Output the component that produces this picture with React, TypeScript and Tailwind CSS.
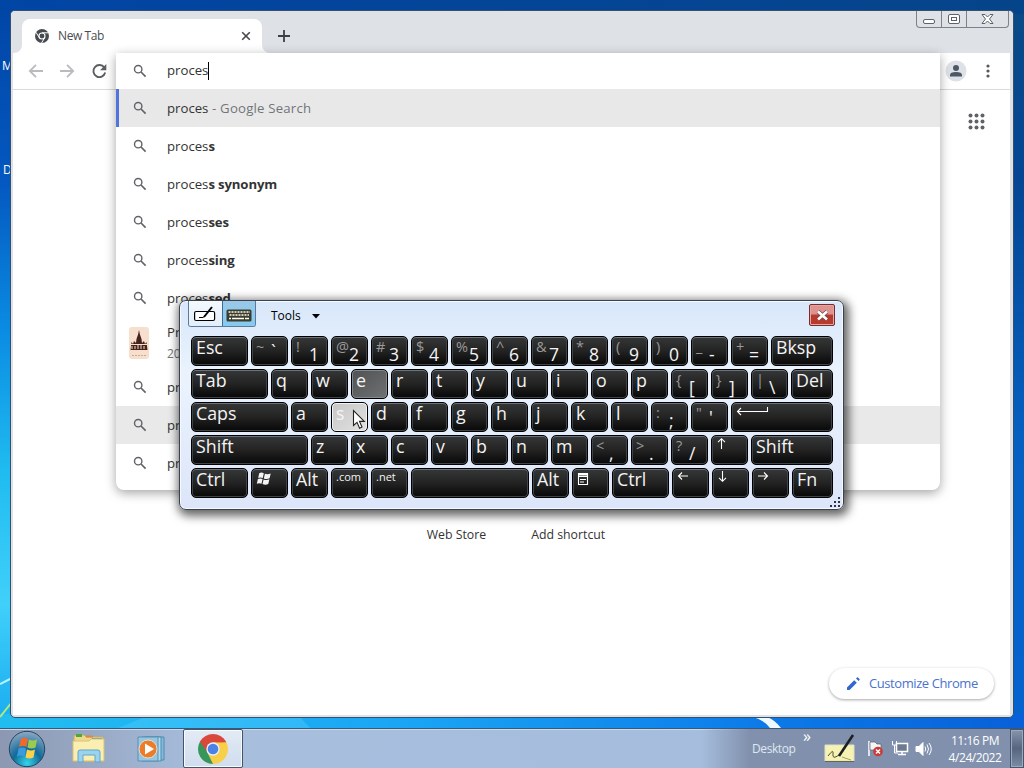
import type { ReactNode } from "react";
import clsx from "clsx";

type KeyDef = {
  w?: string;
  label?: string;
  shift?: string;
  small?: boolean;
  icon?: ReactNode;
  state?: "lit" | "pressed";
};

const letters = (text: string): KeyDef[] =>
  text.split("").map((label) => ({ label }));

const svgKey = {
  fill: "none",
  stroke: "#fff",
  strokeWidth: 1.1,
};

const winIcon = (
  <svg width="16" height="14" viewBox="0 0 16 14" className="mt-[3px]">
    <path
      fill="#f4f4f4"
      d="M3.2 1.2Q5.5 0 7.8 1.2L6.8 6Q4.5 5 2.2 6ZM8.9 1.7Q11.5 2.7 14.7 1.5L13.6 6.2Q11 7.5 7.8 6.4ZM1.9 7Q4.3 6 6.6 7.1L5.5 11.8Q3.3 10.6 .8 11.7ZM7.6 7.5Q10.5 8.6 13.4 7.3L12.3 12Q9.5 13.3 6.5 12.1Z"
    />
  </svg>
);

const menuIcon = (
  <svg width="12" height="14" viewBox="0 0 12 14" className="mt-[3px]">
    <path {...svgKey} d="M1 1.5H10.5M1 4.5H10.5M1.5 1V12.5H10.5V1M3 7.5H9M3 10H7" />
    <path stroke="#fff" strokeWidth="2" d="M1 2.5H11" />
  </svg>
);

const arrow = (d: string) => (
  <svg width="13" height="13" viewBox="0 0 13 13" className="mt-px">
    <path {...svgKey} d={d} />
  </svg>
);

const enterIcon = (
  <svg width="33" height="12" viewBox="0 0 33 12" className="mt-px">
    <path {...svgKey} d="M31.5 3V7.5H1.5M5 4L1.5 7.5L5 11" />
  </svg>
);

const rows: KeyDef[][] = [
  [
    { label: "Esc", w: "w-[57px]" },
    { shift: "~", label: "`" },
    { shift: "!", label: "1" },
    { shift: "@", label: "2" },
    { shift: "#", label: "3" },
    { shift: "$", label: "4" },
    { shift: "%", label: "5" },
    { shift: "^", label: "6" },
    { shift: "&", label: "7" },
    { shift: "*", label: "8" },
    { shift: "(", label: "9" },
    { shift: ")", label: "0" },
    { shift: "_", label: "-" },
    { shift: "+", label: "=" },
    { label: "Bksp", w: "w-[62px]" },
  ],
  [
    { label: "Tab", w: "w-[77px]" },
    ...letters("qw"),
    { label: "e", state: "lit" },
    ...letters("rtyuiop"),
    { shift: "{", label: "[" },
    { shift: "}", label: "]" },
    { shift: "|", label: "\\" },
    { label: "Del", w: "w-[42px]" },
  ],
  [
    { label: "Caps", w: "w-[97px]" },
    { label: "a" },
    { label: "s", state: "pressed" },
    ...letters("dfghjkl"),
    { shift: ":", label: ";" },
    { shift: '"', label: "'" },
    { icon: enterIcon, w: "w-[102px]" },
  ],
  [
    { label: "Shift", w: "w-[117px]" },
    ...letters("zxcvbnm"),
    { shift: "<", label: "," },
    { shift: ">", label: "." },
    { shift: "?", label: "/" },
    { icon: arrow("M5.5 12V2M2 5.2L5.5 1.7L9 5.2") },
    { label: "Shift", w: "w-[82px]" },
  ],
  [
    { label: "Ctrl", w: "w-[57px]" },
    { icon: winIcon },
    { label: "Alt" },
    { label: ".com", small: true },
    { label: ".net", small: true },
    { w: "w-[118px]" },
    { label: "Alt" },
    { icon: menuIcon },
    { label: "Ctrl", w: "w-[57px]" },
    { icon: arrow("M11 6H1.5M5 2.5L1.5 6L5 9.5") },
    { icon: arrow("M5.5 1V11M2 7.8L5.5 11.3L9 7.8") },
    { icon: arrow("M1 6H10.5M7 2.5L10.5 6L7 9.5") },
    { label: "Fn", w: "w-[41px]" },
  ],
];

const suggestions = [
  { text: "proces", hint: " - Google Search", active: true },
  { text: "proces", bold: "s" },
  { text: "proces", bold: "s synonym" },
  { text: "proces", bold: "ses" },
  { text: "proces", bold: "sing" },
  { text: "proces", bold: "sed" },
  { text: "Pr", sub: "20", thumb: true },
  { text: "pr" },
  { text: "pr", hover: true },
  { text: "pr" },
];

function Key({ w, label, shift, small, icon, state }: KeyDef) {
  const high = label === "`" || label === "'";
  return (
    <div
      className={clsx(
        "flex h-[30px] items-start overflow-hidden rounded-[5px] border border-black pl-1 text-[#f4f4f4]",
        w ?? "w-[37px]",
        !state &&
          "bg-linear-to-b from-[#363738] via-[#232323] to-[#080808] shadow-[inset_0_1px_0_#6a737b,inset_0_0_0_1px_#3f4448]",
        state === "lit" &&
          "bg-linear-to-br from-[#505153] to-[#707173] shadow-[inset_0_0_0_1px_#85888c]",
        state === "pressed" &&
          "bg-linear-to-br from-[#c6c6c6] to-[#e2e2e2] shadow-[inset_0_0_0_1px_#f2f2f2]"
      )}
    >
      {icon}
      {shift && (
        <span className="w-[13px] shrink-0 text-[14.5px] leading-[20px] text-[#9a9a9a]">
          {shift}
        </span>
      )}
      {shift && (
        <span
          className={clsx(
            "text-[17.5px]",
            high ? "leading-[29px]" : "leading-[34px]",
            label === "`" && "pl-0.5"
          )}
        >
          {label}
        </span>
      )}
      {!shift && label && (
        <span
          className={
            small ? "text-[11px] leading-[16px]" : "text-[17.8px] leading-[20px]"
          }
        >
          {label}
        </span>
      )}
    </div>
  );
}

function SearchIcon() {
  return (
    <svg width="14" height="14" viewBox="0 0 14 14" fill="none" stroke="#606367">
      <circle cx="5.2" cy="5.2" r="3.7" strokeWidth="1.4" />
      <path d="M8 8L12.6 12.6" strokeWidth="1.7" />
    </svg>
  );
}

function Thumb() {
  return (
    <svg width="20" height="32" viewBox="0 0 20 32" className="rounded-[3px]">
      <rect width="20" height="32" fill="#f6dfcd" />
      <path
        fill="#46201c"
        d="M10 3L10.8 7L12.5 12L13 16L15 14L16 17L17.5 15L18.5 23H1.5L2.5 15L4 17L5 14L7 16L7.5 12L9.2 7Z"
      />
      <path stroke="#f6dfcd" strokeWidth="1" d="M3 22V19M6 22V19M9 22V18M12 22V18M15 22V19M2 17.5H18" />
      <path stroke="#c9a993" strokeDasharray="2 1" d="M3 28.5H17" />
    </svg>
  );
}

function Omnibox() {
  return (
    <div className="absolute left-[105px] top-[42px] h-[437px] w-[824px] overflow-hidden rounded-b-lg bg-white shadow-[0_3px_11px_rgba(0,0,0,0.36)]">
      <div className="flex h-[36px] items-center pl-[17px]">
        <SearchIcon />
        <span className="ml-[20px] text-[13.2px] text-[#333]">proces</span>
        <span className="h-[18px] w-px bg-black" />
      </div>
      {suggestions.map((s, i) => (
        <div
          key={i}
          className={clsx(
            "flex items-center",
            s.thumb ? "h-[51px] pl-[13px]" : "h-[38px]",
            s.active && "border-l-[3px] border-[#4f74dd] bg-[#e8e8e8] pl-[14px]",
            s.hover && "bg-[#e9e9e9]",
            !s.active && !s.thumb && "pl-[17px]"
          )}
        >
          {s.thumb ? <Thumb /> : <SearchIcon />}
          <div
            className={clsx(
              "whitespace-pre text-[13.2px] leading-[21px] text-[#333]",
              s.thumb ? "ml-[18px]" : "ml-[20px]"
            )}
          >
            {s.text}
            {s.bold && <b className="tracking-[-0.15px]">{s.bold}</b>}
            {s.hint && (
              <span className="tracking-[0.2px] text-[#70757a]">{s.hint}</span>
            )}
            {s.sub && <div className="text-[12px] text-[#70757a]">{s.sub}</div>}
          </div>
        </div>
      ))}
    </div>
  );
}

function TabStrip() {
  return (
    <div className="flex h-[42px] items-end bg-[#dee1e6] pl-[3px]">
      <svg width="8" height="8" viewBox="0 0 8 8">
        <path d="M8 0A8 8 0 0 1 0 8H8Z" fill="#fff" />
      </svg>
      <div className="flex h-[34px] w-[240px] items-center rounded-t-lg bg-white pl-[13px] pr-[11px]">
        <svg width="14" height="14" viewBox="0 0 14 14">
          <circle cx="7" cy="7" r="7" fill="#474b50" />
          <circle cx="7" cy="7" r="3" fill="#474b50" stroke="#fff" strokeWidth="1.1" />
          <path d="M7 3.8H13.5M4.3 8.7L1 3.3M9.7 8.7L6.5 14" stroke="#fff" strokeWidth="1" />
        </svg>
        <span className="ml-[9px] flex-1 text-[12px] tracking-[-0.4px] text-[#4a4d51]">New Tab</span>
        <svg width="10" height="10" viewBox="0 0 10 10">
          <path d="M1.2 1.2L8.8 8.8M8.8 1.2L1.2 8.8" stroke="#44474b" strokeWidth="1.6" />
        </svg>
      </div>
      <svg width="8" height="8" viewBox="0 0 8 8">
        <path d="M0 0A8 8 0 0 0 8 8H0Z" fill="#fff" />
      </svg>
      <svg width="12" height="12" viewBox="0 0 12 12" className="mb-[11px] ml-2">
        <path d="M6 0V12M0 6H12" stroke="#3c4043" strokeWidth="1.8" />
      </svg>
      <div className="ml-auto mr-1 flex h-[17px] self-start rounded-b border border-t-0 border-[#7d8289]">
        <svg width="91" height="16" viewBox="0 0 91 16" fill="none" stroke="#5d6268">
          <path d="M24.5 0V16M49.5 0V16" stroke="#7d8289" />
          <rect x="6.5" y="8.5" width="11" height="4" rx="1.5" fill="#fff" />
          <rect x="31.5" y="3.5" width="11" height="9" rx="1.5" fill="#fff" />
          <rect x="34.5" y="6.5" width="5" height="3" />
          <path
            d="M65 3.5H68L70.5 6L73 3.5H76L72.5 8L76 12.5H73L70.5 10L68 12.5H65L68.5 8Z"
            fill="#fff"
          />
        </svg>
      </div>
    </div>
  );
}

function Toolbar() {
  return (
    <div className="flex h-[37px] items-center border-b border-[#d9dadc] bg-white pl-[15px]">
      <svg width="80" height="16" viewBox="0 0 80 16" fill="none">
        <path d="M15 8H2M8 1.8L1.8 8L8 14.2" stroke="#b9bbbe" strokeWidth="1.8" />
        <path d="M32 8H45M39 1.8L45.2 8L39 14.2" stroke="#b9bbbe" strokeWidth="1.8" />
        <path d="M76.3 4.6A6 6 0 1 0 77.2 9.6" stroke="#5b5e62" strokeWidth="1.9" />
        <path d="M78.3 1V7.3H72Z" fill="#5b5e62" />
      </svg>
      <svg width="22" height="22" viewBox="0 0 22 22" className="ml-auto">
        <circle cx="11" cy="11" r="10.5" fill="#dee1e6" />
        <circle cx="11" cy="8" r="3" fill="#4d5866" />
        <path d="M5 16.5V15Q5 12 11 12T17 15V16.5Z" fill="#4d5866" />
      </svg>
      <svg width="4" height="14" viewBox="0 0 4 14" fill="#55585c" className="ml-[19px] mr-[20px]">
        <circle cx="2" cy="2" r="1.6" />
        <circle cx="2" cy="7" r="1.6" />
        <circle cx="2" cy="12" r="1.6" />
      </svg>
    </div>
  );
}

function Browser() {
  return (
    <div className="absolute left-[10px] top-[10px] flex h-[708px] w-[1004px] flex-col overflow-hidden rounded-[5px] border border-[#34506e] bg-[#dee1e6]">
      <TabStrip />
      <div className="mb-0.5 ml-0.5 mr-[3px] flex grow flex-col bg-white">
        <Toolbar />
        <div className="flex justify-end pr-[25px] pt-[23px]">
          <svg width="17" height="17" viewBox="0 0 17 17" fill="#5f6368">
            {[2.5, 8.5, 14.5].map((y) =>
              [2.5, 8.5, 14.5].map((x) => <circle key={`${x}-${y}`} cx={x} cy={y} r="2" />)
            )}
          </svg>
        </div>
        <div className="mt-[396px] flex justify-center gap-[45px] pl-[9px] text-[12.3px] leading-[18px] text-[#333]">
          <span>Web Store</span>
          <span>Add shortcut</span>
        </div>
        <div className="mb-[16px] mr-[16px] mt-auto flex h-[31px] w-[165px] items-center self-end rounded-full bg-white pl-[17px] text-[13px] tracking-[-0.42px] text-[#4a72cf] shadow-[0_1px_3px_rgba(0,0,0,0.35)]">
          <svg width="14" height="14" viewBox="0 0 14 14" fill="#2f68cf">
            <path d="M1 10.4V13H3.6L10.8 5.8L8.2 3.2ZM12.6 4L10 1.4L11 .5Q11.5 .1 12 .5L13.5 2Q13.9 2.5 13.5 3Z" />
          </svg>
          <span className="ml-[9px] whitespace-nowrap">Customize Chrome</span>
        </div>
      </div>
      <Omnibox />
    </div>
  );
}

function Keyboard() {
  return (
    <div className="absolute left-[179px] top-[300px] flex h-[210px] w-[665px] flex-col rounded-[7px] border border-[#39424d] bg-linear-to-b from-[#d8e7fa] via-[#eaf3fd] via-35% to-[#dde5fa] shadow-[inset_0_0_0_1px_#f5faff,2px_3px_10px_3px_rgba(0,0,0,0.6)]">
      <div className="flex h-[35px] items-start pl-2">
        <div className="flex h-[26px] w-[68px] overflow-hidden rounded-b-[3px] border border-t-0 border-[#5d7a9c]">
          <div className="flex w-[33px] justify-center bg-linear-to-b from-[#f4f9ff] to-[#e3eefb] pt-1">
            <svg width="22" height="17" viewBox="0 0 22 17" fill="none" stroke="#000">
              <rect x=".6" y="6.5" width="20" height="9" rx="1.5" fill="#fff" strokeWidth="1.2" />
              <path d="M5 12.5H9Q11 11 12 9.500" />
              <path d="M10 12L18 2" strokeWidth="2" />
            </svg>
          </div>
          <div className="flex w-[34px] justify-center border-l border-[#3d6c98] bg-linear-to-b from-[#9ac8e8] to-[#84caf0] pt-[8px]">
            <svg width="26" height="13" viewBox="0 0 26 13">
              <rect x=".5" y=".5" width="25" height="12" rx="1.5" fill="#3b3c30" />
              <path
                stroke="#fffde8"
                strokeWidth="1.6"
                strokeDasharray="2 1"
                d="M2.5 3H24M3.5 6H23"
              />
              <path stroke="#fffde8" strokeWidth="1.6" d="M3 9.5H5M6 9.5H18M19 9.5H23" />
            </svg>
          </div>
        </div>
        <span className="ml-[15px] mt-[6px] text-[12px] leading-[18px] text-black">Tools</span>
        <svg width="8" height="5" viewBox="0 0 8 5" className="ml-[11px] mt-[13px]">
          <path d="M0 0H8L4 4.5Z" />
        </svg>
        <div className="ml-auto mr-[8px] mt-[3px] flex h-[22px] w-[26px] items-center justify-center rounded-xs border border-[#762c31] bg-linear-to-b from-[#dd9490] from-45% to-[#b8392d] to-50% shadow-[inset_0_0_0_1px_#e5a7a0]">
          <svg width="13" height="11" viewBox="0 0 13 11">
            <path d="M2 1.5L11 9.5M11 1.5L2 9.5" stroke="#6d4548" strokeWidth="4" />
            <path d="M2 1.5L11 9.5M11 1.5L2 9.5" stroke="#fff" strokeWidth="2.6" />
          </svg>
        </div>
      </div>
      <div className="flex flex-col gap-[3px] pl-[11px]">
        {rows.map((row, i) => (
          <div key={i} className="flex gap-[3px]">
            {row.map((k, j) => (
              <Key key={j} {...k} />
            ))}
          </div>
        ))}
      </div>
      <svg width="12" height="12" viewBox="0 0 12 12" fill="#2d3540" className="absolute bottom-px right-[2px]">
        <path d="M9 1h2v2H9zM9 5h2v2H9zM5 5h2v2H5zM9 9h2v2H9zM5 9h2v2H5zM1 9h2v2H1z" />
      </svg>
      <svg width="14" height="22" viewBox="0 0 14 22" className="absolute left-[172px] top-[108px]">
        <path
          d="M1.5 1.5V16.5L5 13.3L7.6 19.2L10 18.1L7.5 12.4H12.3Z"
          fill="#fff"
          stroke="#222"
          strokeWidth="1.1"
        />
      </svg>
    </div>
  );
}

function Wallpaper() {
  return (
    <svg width="1024" height="728" viewBox="0 0 1024 728" className="absolute inset-0">
      <defs>
        <linearGradient id="left" x1="0" y1="0" x2="0" y2="1">
          <stop offset="0" stopColor="#0145a5" />
          <stop offset=".25" stopColor="#0458bf" />
          <stop offset=".45" stopColor="#0a8be2" />
          <stop offset=".65" stopColor="#20bcf0" />
          <stop offset=".83" stopColor="#40d0fa" />
          <stop offset="1" stopColor="#18aaf0" />
        </linearGradient>
        <linearGradient id="right" x1="0" y1="0" x2="0" y2="1">
          <stop offset="0" stopColor="#0a4a86" />
          <stop offset=".25" stopColor="#044694" />
          <stop offset=".6" stopColor="#0560c0" />
          <stop offset="1" stopColor="#0563d0" />
        </linearGradient>
        <linearGradient id="bottom">
          <stop offset="0" stopColor="#22bdf0" />
          <stop offset=".4" stopColor="#1aa5f4" />
          <stop offset=".75" stopColor="#0c7ae8" />
          <stop offset="1" stopColor="#0860d8" />
        </linearGradient>
        <linearGradient id="top">
          <stop offset="0" stopColor="#0145a5" />
          <stop offset="1" stopColor="#064489" />
        </linearGradient>
      </defs>
      <rect width="1024" height="728" fill="url(#left)" />
      <rect x="500" width="524" height="728" fill="url(#right)" />
      <rect width="1024" height="14" fill="url(#top)" />
      <rect y="714" width="1024" height="14" fill="url(#bottom)" />
      <path d="M0 717L12 702" stroke="#b6ea7a" strokeWidth="2" />
      <path d="M0 684L12 678" stroke="#b8f2ff" strokeWidth="2" />
      <path d="M753 717Q764 720 770 728H781Q775 720 767 717Z" fill="#effaff" />
      <path d="M118 728L145 717H300L310 728Z" fill="#5cd0ff" opacity=".35" />
    </svg>
  );
}

function Taskbar() {
  return (
    <div className="relative flex h-10 items-center border-t border-[#3a5878] bg-linear-to-r from-[#8c98b1] via-[#a7bedd] via-20% to-[#a5bddd] shadow-[inset_0_1px_0_#c5dcef]">
      <svg width="38" height="38" viewBox="0 0 38 38" className="ml-2 shrink-0">
        <defs>
          <radialGradient id="orb" cx=".5" cy=".9" r=".9">
            <stop offset="0" stopColor="#35d6ea" />
            <stop offset=".45" stopColor="#116a99" />
            <stop offset="1" stopColor="#8eaac5" />
          </radialGradient>
        </defs>
        <circle cx="19" cy="19" r="17.7" fill="url(#orb)" stroke="#254461" />
        <path d="M13 9Q16 6.5 20 9L18.5 17Q15 15 11 17Z" fill="#ec6a2b" />
        <path d="M21 9.5Q25 11.5 29 9.5L27.5 17.5Q23.5 19.5 19.5 17.5Z" fill="#9ccc4e" />
        <path d="M10.5 18.5Q14.5 16.5 18 18.5L16.5 26.5Q13 24.5 9 26.5Z" fill="#3a9be0" />
        <path d="M19 19.5Q23 21.5 27 19.5L25.5 27.5Q21.5 29.5 17.5 27.5Z" fill="#fbd04a" />
      </svg>
      <svg width="34" height="32" viewBox="0 0 34 32" className="ml-[26px] shrink-0">
        <path d="M2 4Q2 2 4 2H12L14 4H31V28H2Z" fill="#ecd98b" stroke="#c8ae5f" />
        <path d="M4 2.5H10" stroke="#4ba83c" strokeWidth="3" />
        <path d="M14 3.5H21" stroke="#d88a4b" strokeWidth="2" />
        <path d="M20 6H30" stroke="#5b93c5" strokeWidth="2" />
        <path d="M1 8H17L19 6H32V28H1Z" fill="#faeeb0" stroke="#d8c176" />
        <path d="M6 29V19Q6 17 8 17H26Q28 17 28 19V29H23V22H11V29Z" fill="#9bd3ef" stroke="#5ca6d0" />
      </svg>
      <svg width="30" height="28" viewBox="0 0 30 28" className="ml-[31px] shrink-0">
        <path d="M8 2H27V25H8Z" fill="#86bbd8" stroke="#4b8bb4" />
        <path d="M5 2H24V26H5Z" fill="#b5d9e9" stroke="#4b8bb4" />
        <path d="M1 2H21V26H1Z" fill="#99c5dd" stroke="#5791b5" />
        <circle cx="11" cy="14" r="9" fill="#ee7b27" stroke="#d9dfe0" />
        <path d="M8 8.5L17 14L8 19.5Z" fill="#fff" />
      </svg>
      <div className="ml-[16px] flex h-[39px] w-[60px] shrink-0 items-center justify-center rounded-xs border border-[#43556d] bg-linear-to-b from-[#e3ebf5] to-[#d0dded] shadow-[inset_0_0_0_1px_#f7faff]">
        <svg width="30" height="30" viewBox="0 0 30 30">
          <path d="M15 15L2.01 7.5A15 15 0 0 1 27.99 7.5Z" fill="#d9483b" />
          <path d="M15 15L27.99 7.5A15 15 0 0 1 15 30Z" fill="#f8cf49" />
          <path d="M15 15L15 30A15 15 0 0 1 2.01 7.5Z" fill="#37965b" />
          <path d="M15 8.3H28.3L20.8 18.35L15 30L9.2 18.35Z" fill="#f8cf49" />
          <path d="M2.01 7.5L9.2 18.35L15 15V8.3H28.3L25 4H5Z" fill="#d9483b" />
          <circle cx="15" cy="15" r="6.7" fill="#e9f0fb" />
          <circle cx="15" cy="15" r="5.3" fill="#4a82e8" />
        </svg>
      </div>
      <div className="ml-auto flex h-full items-center bg-linear-to-r from-transparent to-[#8191ad] to-15% pl-[51px] text-white">
        <span className="w-[43px] text-[12px] tracking-[-0.4px] text-[#dfe7f0]">Desktop</span>
        <span className="ml-[8px] w-[9px] self-start text-[16px] leading-[15px]">»</span>
        <svg width="34" height="32" viewBox="0 0 34 32" className="ml-[11px]">
          <path d="M2 12H31V28H2Z" fill="#f6f2b4" stroke="#e0dfc8" />
          <path d="M2 28.5H31" stroke="#66654d" />
          <path d="M5 23Q11 15 10 21T16 22" stroke="#4e5235" fill="none" />
          <path d="M16 23L30 2" stroke="#1d1f22" strokeWidth="2.6" />
          <path d="M19 24L28 27" stroke="#a5a06a" />
        </svg>
        <svg width="17" height="17" viewBox="0 0 17 17" className="ml-[10px]">
          <path d="M2 1V16" stroke="#fff" strokeWidth="1.5" />
          <path d="M3 2H8L10 4H14V10H3Z" fill="#f6f6f6" stroke="#565f6e" strokeWidth=".7" />
          <circle cx="11" cy="11.5" r="4.8" fill="#cb3a37" />
          <path d="M9 9.5L13 13.5M13 9.5L9 13.5" stroke="#fff" strokeWidth="1.5" />
        </svg>
        <svg width="18" height="17" viewBox="0 0 18 17" className="ml-[7px]" fill="none" stroke="#fff">
          <rect x="5.5" y="3.5" width="11" height="8" fill="#6c7b91" strokeWidth="1.5" />
          <path d="M7 14.5H15M11 12V14" strokeWidth="1.5" />
          <path d="M1.5 1V5H5.5V1M3.5 5V13H7" />
        </svg>
        <svg width="18" height="16" viewBox="0 0 18 16" className="ml-[6px]" fill="none" stroke="#fff">
          <path d="M1 5.5H4L8 1.5V14.5L4 10.5H1Z" fill="#fff" />
          <path d="M10 5.5Q11.5 8 10 10.5M12 3.5Q15 8 12 12.5M14 2Q18.5 8 14 14" />
        </svg>
        <div className="ml-[15px] w-[54px] text-center text-[12px] leading-[17px] tracking-[-0.45px]">
          <div>11:16 PM</div>
          <div>4/24/2022</div>
        </div>
        <div className="ml-[8px] h-full w-[14px] border border-[#45566e] bg-linear-to-b from-[#8695ac] via-[#56667f] to-[#7c8ba4] shadow-[inset_0_0_0_1px_#9aa9bd]" />
      </div>
    </div>
  );
}

export default function App() {
  return (
    <div className="relative flex h-[768px] w-[1024px] flex-col overflow-hidden bg-[#0145a5] font-['Open_Sans','Noto_Sans',sans-serif]">
      <div className="relative h-[728px]">
        <Wallpaper />
        <span className="absolute left-[2px] top-[58px] text-[12px] leading-[16px] text-white">M</span>
        <span className="absolute left-[3px] top-[162px] text-[12px] leading-[16px] text-white">D</span>
        <Browser />
        <Keyboard />
      </div>
      <Taskbar />
    </div>
  );
}
